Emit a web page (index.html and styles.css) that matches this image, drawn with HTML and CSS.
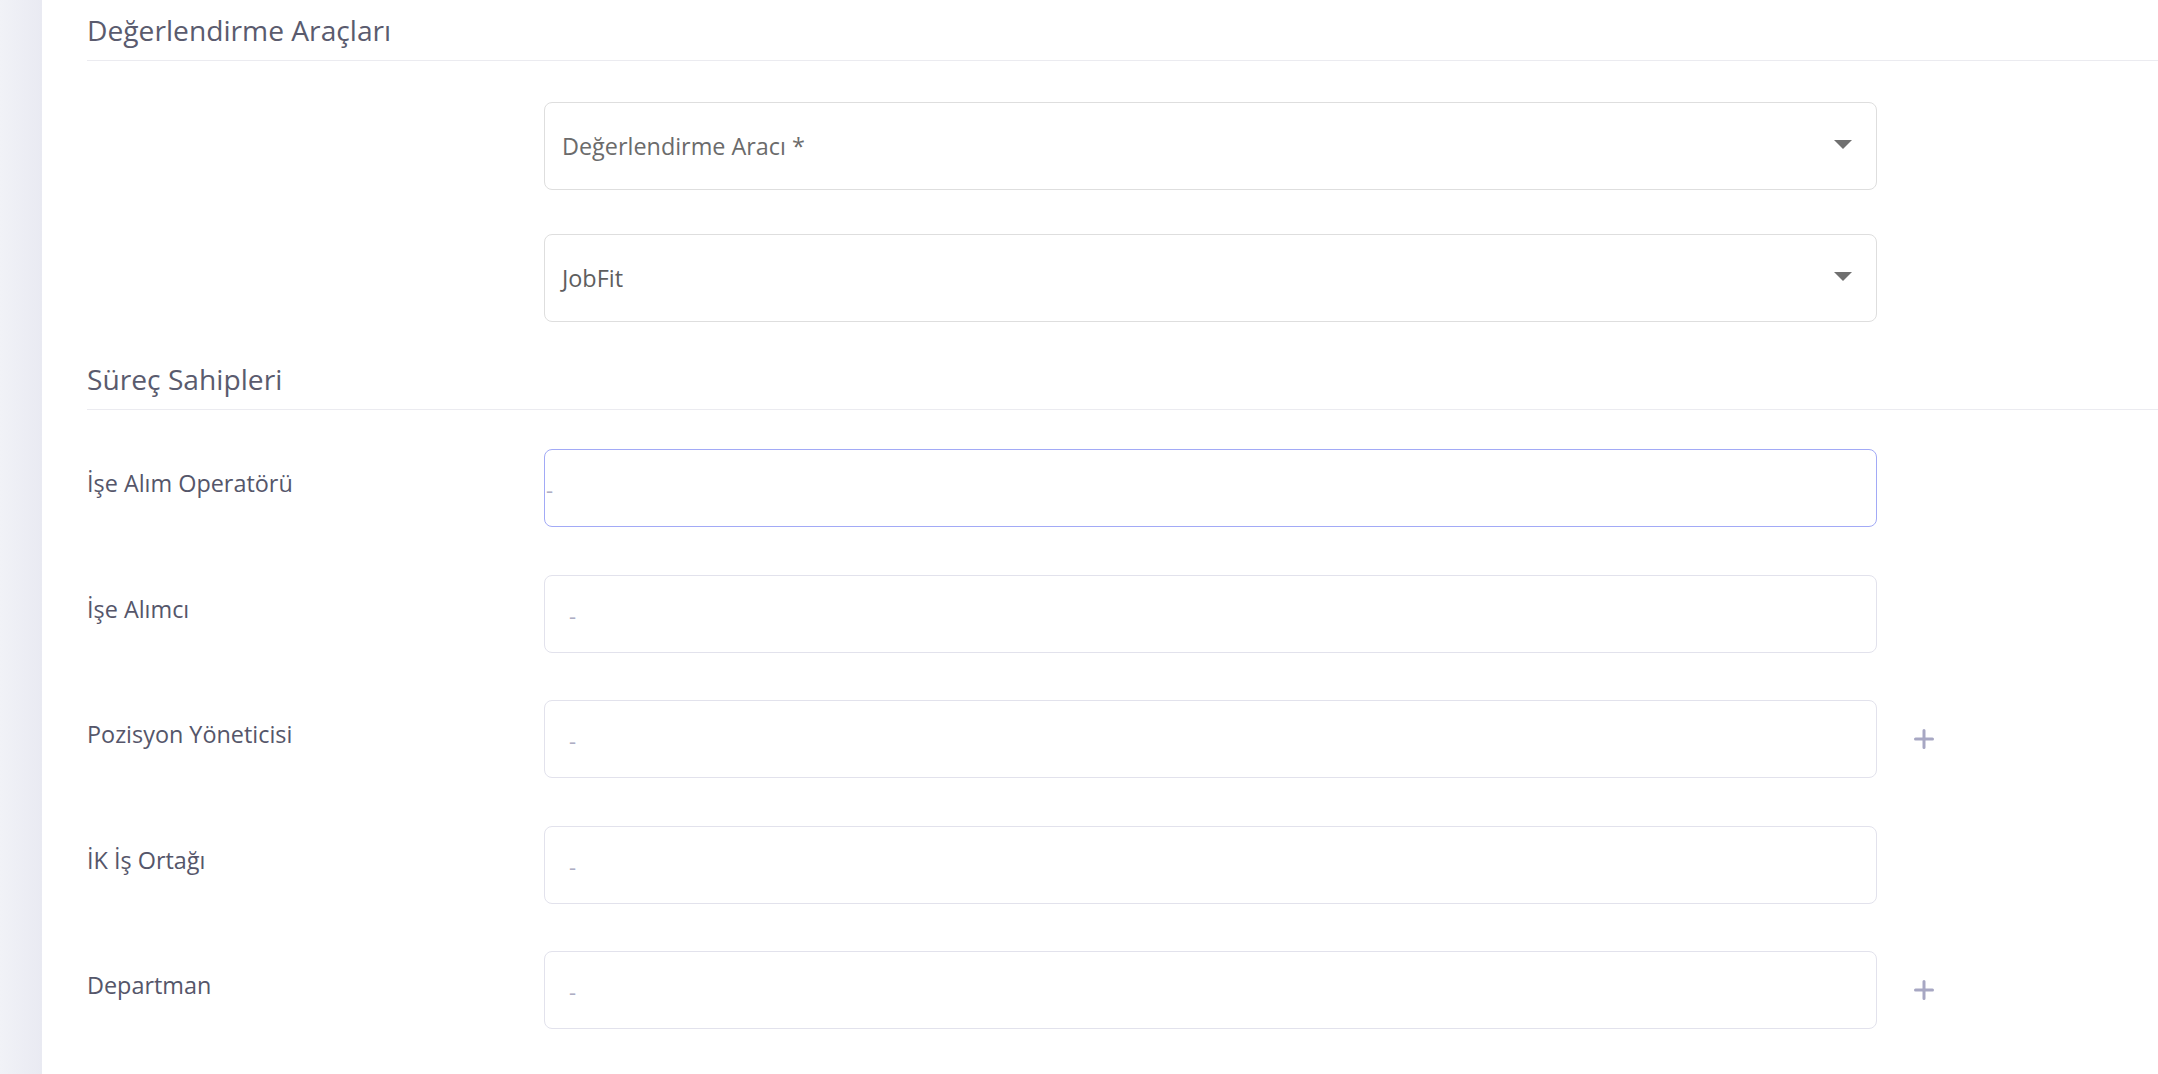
FILE: index.html
```html
<!DOCTYPE html>
<html lang="tr">

<head>
    <meta charset="UTF-8">
    <meta name="viewport" content="width=device-width, initial-scale=1.0">
    <title>Süreç Sahipleri</title>
    <link rel="stylesheet" href="styles.css">
</head>

<body>
    <div class="page">
        <aside class="side"></aside>

        <main class="content">
            <!-- Değerlendirme araçları -->
            <h2 class="section-title">Değerlendirme Araçları</h2>
            <div class="select-list">
                <div class="row">
                    <span class="label"></span>
                    <div class="select">
                        <span class="select-text">Değerlendirme Aracı *</span>
                        <i class="caret"></i>
                    </div>
                </div>
                <div class="row">
                    <span class="label"></span>
                    <div class="select">
                        <span class="select-text value">JobFit</span>
                        <i class="caret"></i>
                    </div>
                </div>
            </div>

            <!-- Süreç sahipleri -->
            <h2 class="section-title second">Süreç Sahipleri</h2>
            <div class="owner-list">
                <div class="row">
                    <span class="label">İşe Alım Operatörü</span>
                    <div class="field focused"><span class="dash">-</span></div>
                </div>
                <div class="row">
                    <span class="label">İşe Alımcı</span>
                    <div class="field"><span class="dash">-</span></div>
                </div>
                <div class="row">
                    <span class="label">Pozisyon Yöneticisi</span>
                    <div class="field"><span class="dash">-</span></div>
                    <a href="javascript:;" class="add">
                        <svg width="20" height="20" viewBox="0 0 20 20">
                            <path d="M10 1.5v17M1.5 10h17" stroke="currentColor" stroke-width="3" stroke-linecap="round" fill="none"/>
                        </svg>
                    </a>
                </div>
                <div class="row">
                    <span class="label">İK İş Ortağı</span>
                    <div class="field"><span class="dash">-</span></div>
                </div>
                <div class="row">
                    <span class="label">Departman</span>
                    <div class="field"><span class="dash">-</span></div>
                    <a href="javascript:;" class="add">
                        <svg width="20" height="20" viewBox="0 0 20 20">
                            <path d="M10 1.5v17M1.5 10h17" stroke="currentColor" stroke-width="3" stroke-linecap="round" fill="none"/>
                        </svg>
                    </a>
                </div>
            </div>
        </main>
    </div>
</body>

</html>
```

FILE: styles.css
```css
* {
    margin: 0;
    padding: 0;
    box-sizing: border-box;
}

body {
    font-family: "Open Sans", "Noto Sans", sans-serif;
    background: #fff;
    color: #4f5063;
}

.page {
    display: flex;
    min-height: 1074px;
}

.side {
    width: 42px;
    flex: none;
    background: linear-gradient(to right, #f1f2f7, #e9eaf2);
}

.content {
    flex: 1;
    padding-left: 45px;
}

.section-title {
    font-size: 28.2px;
    font-weight: 400;
    line-height: 32px;
    padding: 14px 0;
    color: #5a5b6e;
    border-bottom: 1px solid #ebebf0;
}

.section-title.second {
    margin-top: 27px;
}

.select-list {
    display: flex;
    flex-direction: column;
    gap: 44px;
    margin-top: 41px;
}

.owner-list {
    display: flex;
    flex-direction: column;
    gap: 47.5px;
    margin-top: 39px;
}

.row {
    display: grid;
    grid-template-columns: 457px 1333px auto;
    align-items: start;
}

.label {
    font-size: 23.4px;
    line-height: 30px;
    padding-top: 19px;
    color: #55566a;
}

.select {
    height: 88px;
    border: 1px solid #dedede;
    border-radius: 8px;
    display: flex;
    align-items: center;
    justify-content: space-between;
    padding: 0 24px 0 17px;
}

.select-text {
    font-size: 23.4px;
    color: #6b6b6b;
}

.select-text.value {
    color: #5e5e5e;
}

.caret {
    width: 0;
    height: 0;
    border-left: 9px solid transparent;
    border-right: 9px solid transparent;
    border-top: 9px solid #707070;
    margin-top: -3px;
}

.field {
    height: 78px;
    border: 1px solid #e2e2ec;
    border-radius: 8px;
    display: flex;
    align-items: center;
    padding-left: 24px;
}

.field.focused {
    border-color: #a2aaf6;
    padding-left: 1px;
}

.dash {
    font-size: 22px;
    line-height: 30px;
    color: #aeaec4;
    margin-top: 2px;
}

.add {
    display: block;
    width: 20px;
    height: 20px;
    margin: 29px 0 0 37px;
    color: #a7a7c3;
}

.add svg {
    display: block;
}
```
